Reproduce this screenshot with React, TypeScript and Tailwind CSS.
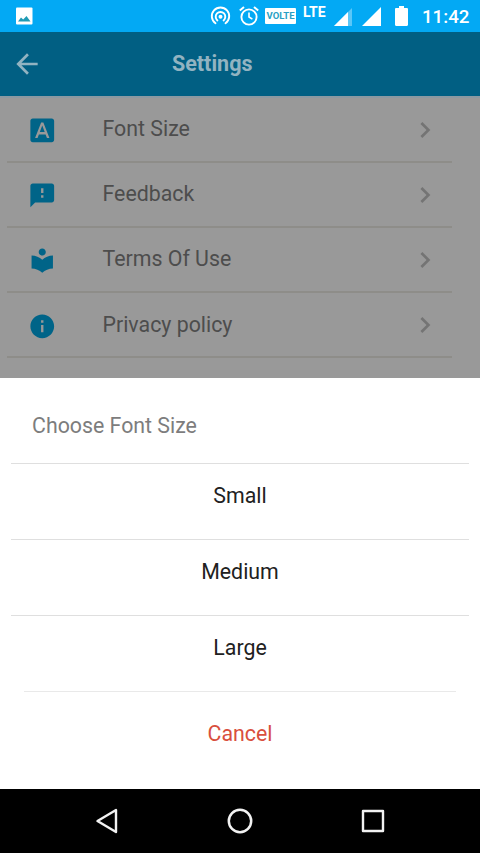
import React from 'react';
import type { IconType } from 'react-icons';
import {
    MdArrowBack,
    MdChevronRight,
    MdFeedback,
    MdFontDownload,
    MdInfo,
    MdLocalLibrary
} from 'react-icons/md';

const settings: { label: string; icon: IconType }[] = [
    { label: 'Font Size', icon: MdFontDownload },
    { label: 'Feedback', icon: MdFeedback },
    { label: 'Terms Of Use', icon: MdLocalLibrary },
    { label: 'Privacy policy', icon: MdInfo }
];

const sizes = ['Small', 'Medium', 'Large'];

const StatusBar: React.FC = () => (
    <div className="flex h-8 shrink-0 items-center bg-[#03a9f4] text-white">
        <svg className="ml-[15px] h-[18px] w-[18px]" viewBox="0 0 18 18">
            <rect x="1" y="0.5" width="16.5" height="17" rx="1" fill="#fff" />
            <path d="M3 14.500 6 10.500l2.200 2L11.500 9l4 5.500z" fill="#1f9bb5" />
        </svg>
        <svg className="ml-[177px] h-5 w-[21px]" viewBox="0 0 21 20" fill="none" stroke="#fff" strokeWidth="1.9" strokeLinecap="round">
            <path d="M5.5 17.3a8.7 8.7 0 1 1 10 0" />
            <path d="M7.4 14.4a4.8 4.8 0 1 1 6.2 0" />
            <circle cx="10.5" cy="10.8" r="2" fill="#fff" stroke="none" />
        </svg>
        <svg className="ml-2 h-5 w-5" viewBox="0 0 20 20" fill="none" stroke="#fff" strokeWidth="1.9">
            <circle cx="10" cy="11" r="7.6" />
            <path d="M10 6.5V11l3.4 2.2" strokeWidth="1.6" />
            <path d="M.8 4.6 5 1M19.2 4.6 15 1" strokeWidth="2" />
        </svg>
        <span className="ml-1.5 flex h-4 w-[31px] items-center justify-center rounded-[1px] bg-white text-[9.5px] leading-none font-bold text-[#2a9fc4]">
            VOLTE
        </span>
        <span className="ml-[7px] w-[25px] pb-2 text-[14px] leading-4 font-bold">LTE</span>
        <svg className="ml-1.5 h-[19px] w-[19px]" viewBox="0 0 19 19" fill="#fff">
            <path d="M0 19 18 1v18z" opacity=".35" />
            <path d="M0 19 14 5v14z" />
        </svg>
        <svg className="ml-[9px] h-[19px] w-[19px]" viewBox="0 0 19 19" fill="#fff">
            <path d="M0 19 19 0v19z" />
        </svg>
        <svg className="ml-3.5 h-5 w-[13px]" viewBox="0 0 13 20" fill="#fff">
            <path d="M4 0h5v2h2.8c.7 0 1.2.5 1.2 1.2v15.6c0 .7-.5 1.2-1.2 1.2H1.2C.5 20 0 19.500 0 18.800V3.200C0 2.500.5 2 1.200 2H4z" />
        </svg>
        <span className="ml-3.5 pt-0.5 text-[18.7px] leading-none font-medium">11:42</span>
    </div>
);

const App: React.FC = () => {
    return (
        <div className="flex h-[853px] w-[480px] flex-col overflow-hidden bg-[#999999] font-['Roboto',sans-serif]">
            <StatusBar />

            <header className="flex h-16 shrink-0 items-center bg-[#015f83] text-[#92b3c1]">
                <MdArrowBack className="ml-[11px] h-8 w-8" />
                <h1 className="ml-[129px] text-[21.5px] leading-none font-bold">Settings</h1>
            </header>

            {/* dimmed list behind the sheet */}
            <main className="h-[282px] shrink-0 border-t-2 border-[#8b99a2] pr-7 pl-[7px]">
                {settings.map(({ label, icon: Icon }, i) => (
                    <div
                        key={label}
                        className={`flex items-center border-b-2 border-[#8e8d89] ${i === 0 ? 'h-[64.5px]' : 'h-[65.33px]'}`}
                    >
                        <Icon className="mt-0.5 ml-[20.5px] h-[28.5px] w-[28.5px] text-[#006488]" />
                        <span className="ml-[46.5px] flex-1 pb-px text-[21.33px] leading-none text-[#4d4d4d]">{label}</span>
                        <MdChevronRight className="mt-px mr-[11px] h-8 w-8 text-[#747474]" />
                    </div>
                ))}
            </main>

            <section className="flex h-[411px] shrink-0 flex-col bg-white text-[21.33px] leading-none text-[#212121]">
                <h2 className="flex h-[85px] items-center pt-[11px] pl-8 text-[#7d7d7d]">Choose Font Size</h2>
                {sizes.map(size => (
                    <button
                        key={size}
                        type="button"
                        className="mx-[11px] flex h-[76px] items-center justify-center border-t border-[#dfdfdf] pb-3"
                    >
                        {size}
                    </button>
                ))}
                <button
                    type="button"
                    className="mx-6 flex h-[86px] items-center justify-center border-t border-[#e9e9e9] pb-0.5 text-[#d94f3d]"
                >
                    Cancel
                </button>
            </section>

            <nav className="flex h-16 shrink-0 items-center justify-between bg-black pr-[93px] pl-[94px]">
                <svg className="h-7 w-7" viewBox="0 0 28 28" fill="none" stroke="#f2f2f2" strokeWidth="2.4" strokeLinejoin="round">
                    <path d="M22 3v22L3.500 14z" />
                </svg>
                <svg className="h-7 w-7" viewBox="0 0 28 28" fill="none" stroke="#f2f2f2" strokeWidth="2.5">
                    <circle cx="13" cy="14" r="11.2" />
                </svg>
                <svg className="h-7 w-7" viewBox="0 0 28 28" fill="none" stroke="#f2f2f2" strokeWidth="2.4" strokeLinejoin="round">
                    <rect x="4" y="4" width="20" height="20" />
                </svg>
            </nav>
        </div>
    );
};

export default App;
